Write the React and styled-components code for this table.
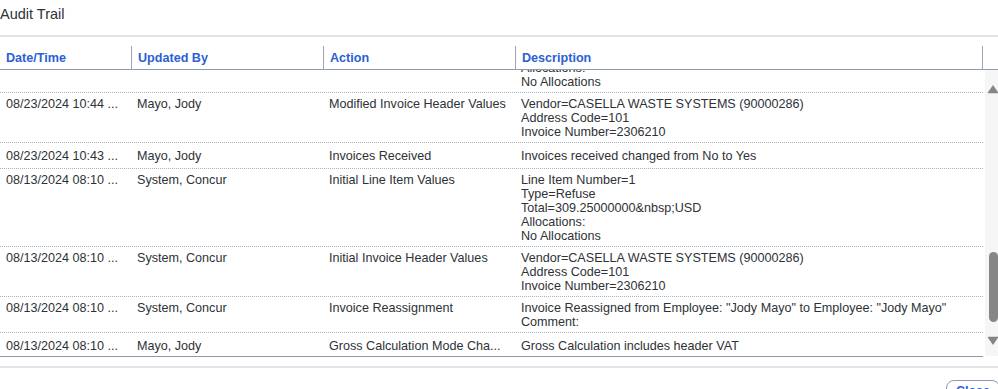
import React from "react";
import styled, { createGlobalStyle } from "styled-components";

const GlobalStyle = createGlobalStyle`
  html, body {
    margin: 0;
    padding: 0;
    overflow: hidden;
    background: #fff;
  }
  body {
    font-family: "Liberation Sans", Arial, sans-serif;
    color: #2e3236;
  }
`;

const entries = [
  {
    date: "08/23/2024 10:44 ...",
    user: "Mayo, Jody",
    action: "Modified Line Item Values",
    lines: [
      "Line Item Number=1",
      "Type=Refuse",
      "Total=309.25000000&nbsp;USD",
      "Allocations:",
      "No Allocations",
    ],
  },
  {
    date: "08/23/2024 10:44 ...",
    user: "Mayo, Jody",
    action: "Modified Invoice Header Values",
    lines: [
      "Vendor=CASELLA WASTE SYSTEMS (90000286)",
      "Address Code=101",
      "Invoice Number=2306210",
    ],
  },
  {
    date: "08/23/2024 10:43 ...",
    user: "Mayo, Jody",
    action: "Invoices Received",
    lines: ["Invoices received changed from No to Yes"],
  },
  {
    date: "08/13/2024 08:10 ...",
    user: "System, Concur",
    action: "Initial Line Item Values",
    lines: [
      "Line Item Number=1",
      "Type=Refuse",
      "Total=309.25000000&nbsp;USD",
      "Allocations:",
      "No Allocations",
    ],
  },
  {
    date: "08/13/2024 08:10 ...",
    user: "System, Concur",
    action: "Initial Invoice Header Values",
    lines: [
      "Vendor=CASELLA WASTE SYSTEMS (90000286)",
      "Address Code=101",
      "Invoice Number=2306210",
    ],
  },
  {
    date: "08/13/2024 08:10 ...",
    user: "System, Concur",
    action: "Invoice Reassignment",
    lines: [
      'Invoice Reassigned from Employee: "Jody Mayo" to Employee: "Jody Mayo"',
      "Comment:",
    ],
  },
  {
    date: "08/13/2024 08:10 ...",
    user: "Mayo, Jody",
    action: "Gross Calculation Mode Cha...",
    lines: ["Gross Calculation includes header VAT"],
  },
];

const App = () => {
  return (
    <>
      <GlobalStyle />
      <Dialog>
        <Title>Audit Trail</Title>
        <HeaderRow>
          <HeadCell first>Date/Time</HeadCell>
          <HeadCell>Updated By</HeadCell>
          <HeadCell>Action</HeadCell>
          <HeadCell>Description</HeadCell>
          <HeadCell />
        </HeaderRow>
        <BodyWrap>
          <Viewport>
            <Rows>
              {entries.map((e, i) => (
                <Row key={i}>
                  <Cell nowrap>{e.date}</Cell>
                  <Cell nowrap>{e.user}</Cell>
                  <Cell nowrap>{e.action}</Cell>
                  <Cell>
                    {e.lines.map((l, j) => (
                      <Line key={j}>{l}</Line>
                    ))}
                  </Cell>
                </Row>
              ))}
            </Rows>
          </Viewport>
          <Scrollbar>
            <Arrow>
              <svg width="12" height="10" viewBox="0 0 12 10">
                <path d="M6 1 L11.2 8.5 Q11.5 9.2 10.8 9.2 L1.2 9.2 Q0.5 9.2 0.8 8.5 Z" fill="#858585" />
              </svg>
            </Arrow>
            <Track>
              <Thumb top={156} size={70} />
            </Track>
            <Arrow>
              <svg width="12" height="10" viewBox="0 0 12 10">
                <path d="M6 9 L11.2 1.5 Q11.5 0.8 10.8 0.8 L1.2 0.8 Q0.5 0.8 0.8 1.5 Z" fill="#858585" />
              </svg>
            </Arrow>
          </Scrollbar>
        </BodyWrap>
        <Footer>
          <CloseButton>Close</CloseButton>
        </Footer>
      </Dialog>
    </>
  );
};

export default App;

const Dialog = styled.div`
  width: 1000px;
  height: 389px;
  overflow: hidden;
  display: flex;
  flex-direction: column;
  & > * {
    flex-shrink: 0;
  }
`;

const Title = styled.div`
  height: 37px;
  box-sizing: border-box;
  padding-top: 5px;
  font-size: 14.5px;
  line-height: 18px;
  color: #2e3236;
  border-bottom: 2px solid #e5e5e5;
`;

const HeaderRow = styled.div`
  display: grid;
  grid-template-columns: 131px 192px 192px 467px 1fr;
  padding-top: 9px;
  border-bottom: 1px solid #8d9aab;
`;

const HeadCell = styled.div`
  height: 23px;
  box-sizing: border-box;
  padding-left: 6px;
  display: flex;
  align-items: center;
  border-left: ${(p) => (p.first ? "none" : "1px solid #9aa6b5")};
  font-size: 12.6px;
  font-weight: 700;
  color: #2c5fd4;
`;

const BodyWrap = styled.div`
  display: flex;
  height: 287px;
`;

const Viewport = styled.div`
  flex: 1;
  height: 287px;
  box-sizing: border-box;
  overflow: hidden;
  border-bottom: 1px solid #8d9aab;
  margin-right: 2px;
`;

const Rows = styled.div`
  margin-top: -55px;
  display: flex;
  flex-direction: column;
`;

const Row = styled.div`
  display: grid;
  grid-template-columns: 131px 192px 192px 1fr;
  align-content: center;
  align-items: start;
  min-height: 25px;
  border-bottom: 1px dotted #a7b3c3;
`;

const Cell = styled.div`
  padding: 3.5px 6px;
  font-size: 12.6px;
  line-height: 14px;
  color: #2e3236;
  white-space: ${(p) => (p.nowrap ? "nowrap" : "normal")};
  overflow: hidden;
`;

const Line = styled.div`
  white-space: nowrap;
`;

const Scrollbar = styled.div`
  width: 15px;
  height: 286px;
  background: #f6f6f6;
  display: flex;
  flex-direction: column;
  padding: 11px 0 8px;
  box-sizing: border-box;
`;

const Arrow = styled.div`
  height: 15px;
  display: flex;
  align-items: center;
  justify-content: center;
`;

const Track = styled.div`
  flex: 1;
`;

const Thumb = styled.div`
  margin-top: ${(p) => p.top}px;
  height: ${(p) => p.size}px;
  margin-left: 4px;
  margin-right: 2px;
  border-radius: 5px;
  background: #868686;
`;

const Footer = styled.div`
  margin-top: 9px;
  border-top: 2px solid #e5e5e5;
  padding-top: 12px;
  display: flex;
  justify-content: flex-end;
`;

const CloseButton = styled.button`
  height: 22px;
  padding: 0 9px;
  border: 1px solid #8d9aab;
  border-radius: 8px;
  background: #fff;
  font-family: "Liberation Sans", Arial, sans-serif;
  font-size: 12.5px;
  font-weight: 700;
  color: #2c5fd4;
`;
